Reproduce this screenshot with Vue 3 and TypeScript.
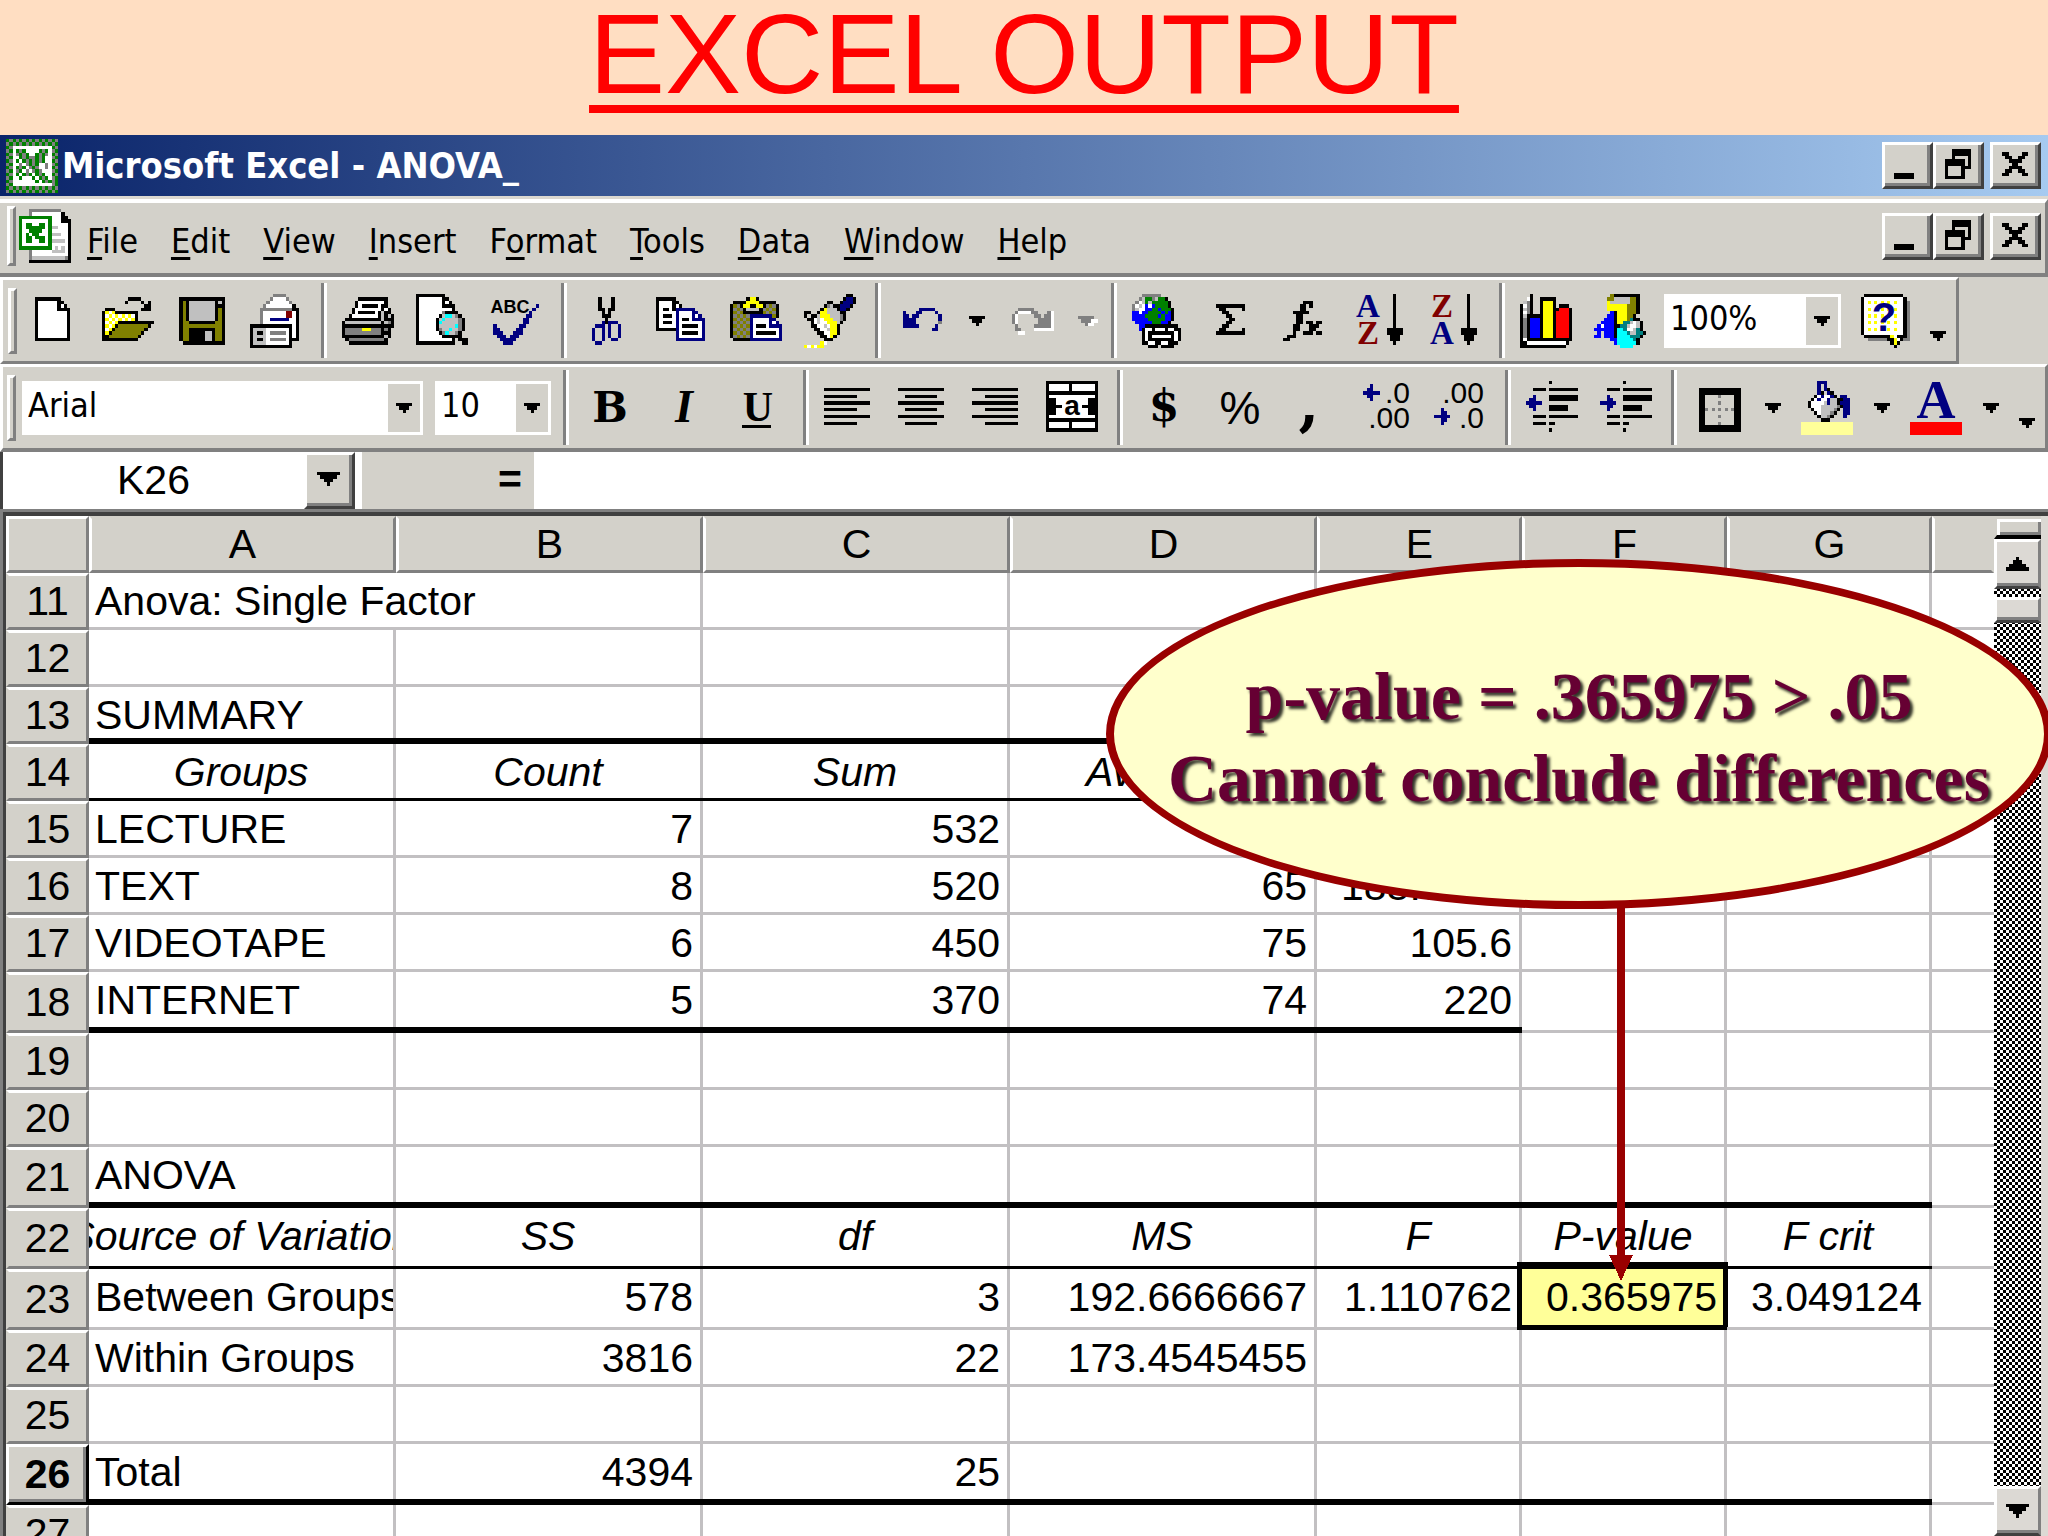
<script setup lang="ts">
import { ref } from 'vue'

interface Layer { fill: string; d: string }
interface Label { t: string; x: number; y: number; size: number; fill: string; serif?: boolean; slab?: boolean; bold?: boolean; italic?: boolean; anchor?: 'start' | 'middle' | 'end' }
interface Icon { layers: Layer[]; labels: Label[] }
interface Tool { kind: 'tool' | 'sep' | 'font' | 'size' | 'zoom' | 'more'; icon?: string; label?: string; drop?: boolean; off?: boolean }
interface Cell { t: string; a?: 'c' | 'r'; span?: number; hot?: boolean }
interface Row { n: number; cells: Cell[]; tall?: boolean; rule?: 'thick' | 'thin'; upTo?: number }

const palette: Record<string, string> = {
  k: '#000000', w: '#ffffff', g: '#808080', s: '#c0c0c0', n: '#000080', b: '#0000ff', y: '#ffff00',
  o: '#808000', r: '#800000', R: '#ff0000', t: '#008080', c: '#00ffff', G: '#008000', f: '#ffff99',
}

// Turns a bitmap written as text into one path per colour; a cell is about 3.25 by 3.375 px.
function paint(rows: string[]): Layer[] {
  const out: Record<string, string> = {}
  const px = (c: number) => Math.round(c * 3.25)
  const py = (r: number) => Math.round(r * 3.375)
  rows.forEach((row, r) => {
    let c = 0
    while (c < row.length) {
      const ch = row[c]
      let e = c + 1
      while (e < row.length && row[e] === ch) e++
      if (ch !== '.') out[ch] = (out[ch] ?? '') + `M${px(c)} ${py(r)}H${px(e)}V${py(r + 1)}H${px(c)}z`
      c = e
    }
  })
  return Object.entries(out).map(([ch, d]) => ({ fill: palette[ch], d }))
}
const icon = (rows: string[], labels: Label[] = []): Icon => ({ layers: paint(rows), labels })

const serifLabel = (t: string, x: number, y: number, size: number, fill: string): Label =>
  ({ t, x, y, size, fill, serif: true, bold: true, anchor: 'middle' })

const sortArrow = ['............k...', '............k...', '............k...', '............k...', '............k...',
  '............k...', '............k...', '............k...', '............k...', '............k...', '..........kkkkk.',
  '..........kkkkk.', '...........kkk..', '...........kkk..', '............k...']

const lines = (pad: number) => {
  const rows: string[] = ['']
  for (let i = 0; i < 6; i++) {
    rows.push('', i % 2 ? '.'.repeat(pad) + 'k'.repeat(10) : 'k'.repeat(14))
  }
  return rows
}

const icons: Record<string, Icon> = {
  app: icon([
    'GgGgGgGgGgGgGgGg', 'gGgGgGgGgGgGgGgG', 'GgwwwwwwwwwwwwGg', 'gGwGgGwwwwGgGwgG', 'GgwgGgGwwGgGgwGg',
    'gGwwGgGggGgGwwgG', 'GgwGwGgGgGgGwwGg', 'gGwwgwgGgGwwgwgG', 'GgwGgGwgGgwwgwGg', 'gGwgGwgwgGgwwwgG',
    'GgwGwGgGwGgGwwGg', 'gGwwGwwwGwGgGwgG', 'GgwwwwwwwGwGgGgG', 'gGwwwwwwwwwwwwgG', 'GgGgGgGgGgGgGgGg', 'gGgGgGgGgGgGgGgG']),
  book: icon([
    '...gggggggggg...', '...gwwwwwwwwwk..', 'GGGGGGGGGGwwwkk.', 'GwwwwwwwwGwwwkkk', 'GwGGwwGGwGwwwwwk', 'GwGGGGGGwGsswwwk',
    'GwwGGGGwwGwwwwwk', 'GwGwGGwwwGssswwk', 'GwGGwGGGwGwwwwwk', 'GwGGwwGGwGsssswk', 'GwwwwwwwwGwwwwwk', 'GGGGGGGGGGwswswk',
    '...gwwwwwwsssswk', '...gwwwwwwwwwwwk', '...gssssssssssgk', '...kkkkkkkkkkkkk']),
  new: icon([
    '', '..kkkkkkkk......', '..kwwwwwwkk.....', '..kwwwwwwkwk....', '..kwwwwwwkkkk...', '..kwwwwwwwwwk...', '..kwwwwwwwwwk...',
    '..kwwwwwwwwwk...', '..kwwwwwwwwwk...', '..kwwwwwwwwwk...', '..kwwwwwwwwwk...', '..kwwwwwwwwwk...', '..kwwwwwwwwwk...', '..kkkkkkkkkkk...']),
  open: icon([
    '', '........kkkk....', '.......k....k.k.', '.............kk.', '.kkk........kkk.', 'kywykkkkkkk.....', 'kwywywywywk.....', 'kywywywywyk.....',
    'kwywykkkkkkkkkkk', 'kywykoooooooook.', 'kwykoooooooook..', 'kykoooooooook...', 'kkoooooooook....', 'kkkkkkkkkkk.....']),
  save: icon([
    '', '.kkkkkkkkkkkkkk.', '.kokssssssssksk.', '.koksssssssskkk.', '.koksssssssskok.', '.koksssssssskok.', '.koksssssssskok.',
    '.koksssssssskok.', '.kookkkkkkkkook.', '.kooooooooooook.', '.kookkkkkkkkook.', '.kookkkkksskook.', '.kookkkkksskook.', '.kookkkkksskook.', '..kkkkkkkkkkkkk.']),
  mail: icon([
    '.......gggg.....', '......gwwwwg....', '.....gwwwwwwg...', '....gwwwwwwwwk..', '...ggggggggggkk.', '...gwwwwwwwrrwk.', '...gwwwwwwwrrwk.',
    '...gwwnnnnnnwwk.', '...gwwwwwwwwwwk.', 'kkkkkkkkkkkkkwk.', 'ksssswwwwwwwkwk.', 'kskkswgggggwkwk.', 'ksssswwwwwwwkwk.', 'kskkswgggggwkkk.', 'ksssswwwwwwwk...', 'kkkkkkkkkkkkk...']),
  print: icon([
    '', '.....kkkkkkkkk..', '....kwwwwwwwwk..', '....kwkkkkkwkk..', '...kwwwwwwwwkwk.', '...kwkkkkkwkskk.', '..kwwwwwwwwksksk', '.kkkkkkkkkkkskkk',
    'ksssssssssssksgk', 'kkkkkkkkkkkkkkkk', 'kgggggyyygggkgk.', 'kgggggggggggkkk.', 'kkkkkkkkkkkkksk.', '.kgggggggggggk..', '..kkkkkkkkkkkk..']),
  preview: icon([
    'kkkkkkkkk.......', 'kwwwwwwwkk......', 'kwwwwwwwkwk.....', 'kwwwwwwwkkkk....', 'kwwwwwwwwwwk....', 'kwwwwwwwgkkkk...', 'kwwwwwwksccsgk..',
    'kwwwwwkscssssgk.', 'kwwwwwkcsssssgk.', 'kwwwwwkssssscgk.', 'kwwwwwkgsscssgk.', 'kwwwwwwkgcssgk..', 'kwwwwwwwkkkkkk..', 'kwwwwwwwwwwk.kkk', 'kkkkkkkkkkkk..kk']),
  spell: icon([
    '', '', '', '..............n.', '.............n..', '............n...', '...........nn...', '..........nn....', '..........nn....', '.n.......nn.....',
    '.nn.....nn......', '.nnn...nnn......', '..nnn.nnn.......', '...nnnnn........', '....nnn.........'],
    [{ t: 'ABC', x: 20, y: 19, size: 18, fill: '#000', bold: true, anchor: 'middle' }]),
  cut: icon([
    '', '.....k...k......', '.....k...k......', '.....k...k......', '.....kk.kk......', '......k.k.......', '......kkk.......', '.......k........',
    '......nknnn.....', '....nnn.n..n....', '...n..n.n..n....', '...n..n.n..n....', '...n..n.n..n....', '...n..n..nn.....', '....nn..........']),
  copy: icon([
    '', 'kkkkkk..........', 'kwwwwkk.........', 'kwwwwkwk........', 'kwkkwknnnnnn....', 'kwwwwwnwwwwnn...', 'kwkkkwnwwwwnwn..', 'kwwwwwnwkkwnnnn.',
    'kwkkkwnwwwwwwwn.', 'kwwwwwnwkkkkkwn.', 'kkkkkknwwwwwwwn.', '......nwkkkkkwn.', '......nwwwwwwwn.', '......nnnnnnnnn.']),
  paste: icon([
    '', '.....kyyk.......', '.kkkkyyyykkkkk..', 'kogkyykkyykgogk.', 'kgogksssskgogok.', 'kogokkkkkkogogk.', 'kgogognnnnnnnok.', 'kogogonwwwwwnn..',
    'kgogognwwwwwnwn.', 'kogogonwkkkwnnnn', 'kgogognwwwwwwwwn', 'kogogonwkkkkkkwn', 'kgogognwwwwwwwwn', '.kkkkknnnnnnnnnn']),
  painter: icon([
    '.............kk.', '............knnk', '.......kk..knnnk', '......kgskknnnk.', '.....kysssknnk..', 'kk..kyysssskk...', 'k.kksyyysssgk...',
    '.kkwswyyyssgk...', '..kwswwyyysk....', '..kkwwswyyk.....', '...kkwwsyyk.....', '....kkwwyyk.....', '.....kkwyk......', '......kkk.......', '.....yw.........', 'ywywyy..........']),
  undo: icon([
    '', '', '', '', '.......nnnnn....', '..n...nn....n...', '..nn.nn......n..', '..nnnn.......n..', '..nnnn.......g..', '..nnnnn.....n...', '...........nn...']),
  redo: icon([
    '', '', '', '', '....ggggg.......', '...gwwwwgg...gw.', '..gw.....gg.ggw.', '..gw......ggggw.', '..gw......ggggw.', '...g.....gggggw.', '...gg....wwwwww.', '....ww..........']),
  web: icon([
    '...gggggg.......', '..gsGGgsGGk.....', '.gwsGsGGGGGk....', 'gwswbwbGGGGk....', 'gswwbbGGbGGGk...', 'bbwbbGGGGbGbk...', 'bbbbGGGGbGbbk...', 'bbbbbGGGGGbbk...',
    '.bbbbbGGGbbk....', '..bbkkkkkkkkkk..', '..bkwwkwwwkwwkk.', '...kwkkkkkkkkwk.', '...kwkwwwwwwkwk.', '...kwkkkkkkkkwk.', '...kkwwkkwwkkk..', '.....kkk.kkkk...']),
  sum: icon([
    '', '', '', '...kkkkkkkkk....', '....kk.....k....', '.....kk.........', '......kk........', '.......kk.......', '......kk........', '.....kk.........', '....kk.....k....', '...kkkkkkkkk....']),
  fx: icon([
    '', '', '.......kkk......', '......kk.k......', '......kk........', '....kkkkk.......', '.....kk.........', '.....kk.........', '.....kk.kk.kk...', '....kk...kkk....',
    '....kk...kk.....', '....k..kkk.kk...', '..kkk...........', '.kk.............']),
  az: icon(sortArrow, [serifLabel('A', 14, 23, 33, '#000080'), serifLabel('Z', 14, 50, 33, '#800000')]),
  za: icon(sortArrow, [serifLabel('Z', 14, 23, 33, '#800000'), serifLabel('A', 14, 50, 33, '#000080')]),
  chart: icon([
    '...k............', '..wk..kkkkk.....', '.sgk..kyyyk.....', 'kwgk..kyyyk.kkk.', 'ksgk..kyyykkRRRk', 'kwgk..kyyykRRRRk', 'kskkkkkyyykRRRRk', 'kgkbbbkyyykRRRRk', 'kgkbbbkyyykRRRRk',
    'kgkbbbkyyykRRRRk', 'kgkbbbkyyykRRRRk', 'kgkbbbkyyykRRRRk', 'kgkbbbkyyykRRRRk', 'kwkkkkkkkkkkkkkk', 'kkwwwwwwwwwwwwk.', 'kkkkkkkkkkkkkk..']),
  draw: icon([
    '.....okkkkkkkk..', '....oosssssook..', '....yssssssook..', '....yyyyyyoook..', '....yyyyyyoook..', '.....bkyyyoook..', '....bbkyyyook...', '...bbbkyyyotkk..',
    '..bbbbkyyttswsk.', '.bwbbbkkttswwsk.', 'bbbbbbkcctwwstk.', '.b.bbbkccctssttk', 'bb.bbbkcccctttk.', '.....bbccccctk..', '......bcccccck..', '........cccc....']),
  help: icon([
    '.kkkkkkkkkkkk...', 'kwwwwwwwwwwwwk..', 'kwywywywywywwkg.', 'kwwwwwwwwwwwwkg.', 'kwywywywywywwkg.', 'kwwwwwwwwwwwwkg.', 'kwywywywywywwkg.', 'kwwwwwwwwwwwwkg.',
    'kwywywywywywwkg.', 'kwwwwwwwwwwwwkg.', 'kwywywywywywwkg.', 'kwwwwwwwwwwwwkg.', '.kkkkkkkkywkkkg.', '..ggggggkkywkgg.', '.........kyk....', '..........k.....'],
    [{ t: '?', x: 23, y: 37, size: 40, fill: '#000080', bold: true, anchor: 'middle' }]),
  bold: icon([], [{ t: 'B', x: 26, y: 41, size: 42, fill: '#000', slab: true, bold: true, anchor: 'middle' }]),
  italic: icon([], [{ t: 'I', x: 26, y: 41, size: 46, fill: '#000', serif: true, bold: true, italic: true, anchor: 'middle' }]),
  underline: icon(['', '', '', '', '', '', '', '', '', '', '', '', '', '...kkkkkkkkk'], [serifLabel('U', 26, 40, 42, '#000')]),
  left: icon(lines(0)),
  center: icon(lines(2)),
  right: icon(lines(4)),
  merge: icon([
    'kkkkkkkkkkkkkkkk', 'kwwwwwwkwwwwwwwk', 'kwwwwwwkwwwwwwwk', 'kkkkkkkkkkkkkkkk', 'kwwwwwwwwwwwwwwk', 'kkkwwwwwwwwwwkkk', 'kkkwwwwwwwwwwkkk', 'kkkkkwwwwwwkkkkk',
    'kkkwwwwwwwwwwkkk', 'kkkwwwwwwwwwwkkk', 'kwwwwwwwwwwwwwwk', 'kkkkkkkkkkkkkkkk', 'kwwwwwwkwwwwwwwk', 'kwwwwwwkwwwwwwwk', 'kkkkkkkkkkkkkkkk'],
    [{ t: 'a', x: 26, y: 34, size: 28, fill: '#000', bold: true, anchor: 'middle' }]),
  currency: icon([], [{ t: '$', x: 26, y: 40, size: 44, fill: '#000', slab: true, bold: true, anchor: 'middle' }]),
  percent: icon([], [{ t: '%', x: 28, y: 43, size: 46, fill: '#000', anchor: 'middle' }]),
  comma: icon([], [{ t: ',', x: 23, y: 43, size: 60, fill: '#000', slab: true, bold: true, anchor: 'middle' }]),
  more0: icon(['', '...n', '..nn', '.nnnnn', '..nn', '...n'], [
    { t: '.0', x: 50, y: 22, size: 30, fill: '#000', anchor: 'end' }, { t: '.00', x: 50, y: 47, size: 30, fill: '#000', anchor: 'end' }]),
  less0: icon(['', '', '', '', '', '', '', '', '..n', '..nn', 'nnnnn', '..nn', '..n'], [
    { t: '.00', x: 50, y: 22, size: 30, fill: '#000', anchor: 'end' }, { t: '.0', x: 50, y: 47, size: 30, fill: '#000', anchor: 'end' }]),
  outdent: icon([
    '.......k........', '', '..kkkk.kkkkkkkkk', '', '..n....kkkkkkkkk', '.nn....kkkkkkkkk', 'nnnnn...........', '.nn....kkkkkk...', '..n....kkkkkk...', '', '..kkkk.kkkkkkkkk', '', '..kkkk.kk.......', '', '.......k........']),
  indent: icon([
    '.......k........', '', '..kkkk.kkkkkkkkk', '', '..n....kkkkkkkkk', '..nn...kkkkkkkkk', 'nnnnn...........', '..nn...kkkkkk...', '..n....kkkkkk...', '', '..kkkk.kkkkkkkkk', '', '..kkkk.kk.......', '', '.......k........']),
  border: icon([
    '', '', '..kkkkkkkkkkkkk.', '..kkkkkkkkkkkkk.', '..kk....g....kk.', '..kk.........kk.', '..kk....g....kk.', '..kk.........kk.', '..kkg.g.g.g.gkk.', '..kk.........kk.',
    '..kk....g....kk.', '..kk.........kk.', '..kk....g....kk.', '..kkkkkkkkkkkkk.', '..kkkkkkkkkkkkk.']),
  bucket: icon([
    '.....nnn........', '.....n.n........', '.....n.nk.......', '.....nk.nk......', '....kwnwwnk.nn..', '...kwnwwnsskknn.', '..kwwwwsnssknnn.', '..kwwwsssssgknn.',
    '...kwwssssgk.nn.', '....kwsssgk..nn.', '.....kssgk...n..', '......kkk.......', 'ffffffffffffffff', 'ffffffffffffffff', 'ffffffffffffffff', 'ffffffffffffffff']),
  color: icon(['', '', '', '', '', '', '', '', '', '', '', '', 'RRRRRRRRRRRRRRRR', 'RRRRRRRRRRRRRRRR', 'RRRRRRRRRRRRRRRR', 'RRRRRRRRRRRRRRRR'],
    [serifLabel('A', 26, 37, 54, '#000080')]),
}

const caret = paint(['kkkkk', '.kkk.', '..k..'])
const caretOff = paint(['ggggg.', '.gggww', '..gww.'])
const caretBig = paint(['kkkkkkk', '.kkkkk.', '..kkk..', '...k...'])
const caretUp = paint(['...k...', '..kkk..', '.kkkkk.', 'kkkkkkk'])

const windowButtons = [
  { label: 'Minimize', cls: 'min', art: paint(['', '', '', '', '', '', '', 'kkkkkk', 'kkkkkk']) },
  { label: 'Restore', cls: 'restore', art: paint(['..kkkkkk', '..kkkkkk', '..k....k', 'kkkkkk.k', 'kkkkkk.k', 'k....kkk', 'k....k', 'k....k', 'kkkkkk']) },
  { label: 'Close', cls: 'close', art: paint(['', 'kk....kk', '.kk..kk.', '..kkkk..', '...kk...', '..kkkk..', '.kk..kk.', 'kk....kk']) },
]

const menus: [string, string, string][] = [
  ['', 'F', 'ile'], ['', 'E', 'dit'], ['', 'V', 'iew'], ['', 'I', 'nsert'], ['F', 'o', 'rmat'],
  ['', 'T', 'ools'], ['', 'D', 'ata'], ['', 'W', 'indow'], ['', 'H', 'elp'],
]

const tool = (icon: string, label: string, drop = false, off = false): Tool => ({ kind: 'tool', icon, label, drop, off })
const sep: Tool = { kind: 'sep' }
const bars: { name: string; tools: Tool[] }[] = [
  { name: 'Standard', tools: [
    tool('new', 'New'), tool('open', 'Open'), tool('save', 'Save'), tool('mail', 'E-mail'), sep,
    tool('print', 'Print'), tool('preview', 'Print Preview'), tool('spell', 'Spelling'), sep,
    tool('cut', 'Cut'), tool('copy', 'Copy'), tool('paste', 'Paste'), tool('painter', 'Format Painter'), sep,
    tool('undo', 'Undo', true), tool('redo', 'Redo', true, true), sep,
    tool('web', 'Insert Hyperlink'), tool('sum', 'AutoSum'), tool('fx', 'Paste Function'), tool('az', 'Sort Ascending'), tool('za', 'Sort Descending'), sep,
    tool('chart', 'Chart Wizard'), tool('draw', 'Drawing'), { kind: 'zoom' }, tool('help', 'Help'), { kind: 'more' }] },
  { name: 'Formatting', tools: [
    { kind: 'font' }, { kind: 'size' }, sep,
    tool('bold', 'Bold'), tool('italic', 'Italic'), tool('underline', 'Underline'), sep,
    tool('left', 'Align Left'), tool('center', 'Center'), tool('right', 'Align Right'), tool('merge', 'Merge and Center'), sep,
    tool('currency', 'Currency Style'), tool('percent', 'Percent Style'), tool('comma', 'Comma Style'), tool('more0', 'Increase Decimal'), tool('less0', 'Decrease Decimal'), sep,
    tool('outdent', 'Decrease Indent'), tool('indent', 'Increase Indent'), sep,
    tool('border', 'Borders', true), tool('bucket', 'Fill Color', true), tool('color', 'Font Color', true), { kind: 'more' }] },
]
const combos: Record<string, { label: string; value: string }> = {
  font: { label: 'Font', value: 'Arial' },
  size: { label: 'Font Size', value: '10' },
  zoom: { label: 'Zoom', value: '100%' },
}

const nameBox = ref('K26')
const formula = ref('')

const columns = ['A', 'B', 'C', 'D', 'E', 'F', 'G', '']
const L = (t: string): Cell => ({ t })
const C = (t: string): Cell => ({ t, a: 'c' })
const N = (t: string): Cell => ({ t, a: 'r' })
const fill = (cells: Cell[]): Cell[] => {
  const used = cells.reduce((n, c) => n + (c.span ?? 1), 0)
  return cells.concat(Array.from({ length: 8 - used }, () => L('')))
}
const rows: Row[] = [
  { n: 11, cells: fill([{ t: 'Anova: Single Factor', span: 2 }]) },
  { n: 12, cells: fill([]) },
  { n: 13, cells: fill([L('SUMMARY')]), rule: 'thick', upTo: 5 },
  { n: 14, cells: fill([C('Groups'), C('Count'), C('Sum'), C('Average'), C('Variance')]), rule: 'thin', upTo: 5 },
  { n: 15, cells: fill([L('LECTURE'), N('7'), N('532'), N('76'), N('181.3333')]) },
  { n: 16, cells: fill([L('TEXT'), N('8'), N('520'), N('65'), N('188.5714')]) },
  { n: 17, cells: fill([L('VIDEOTAPE'), N('6'), N('450'), N('75'), N('105.6')]) },
  { n: 18, cells: fill([L('INTERNET'), N('5'), N('370'), N('74'), N('220')]), tall: true, rule: 'thick', upTo: 5 },
  { n: 19, cells: fill([]) },
  { n: 20, cells: fill([]) },
  { n: 21, cells: fill([L('ANOVA')]), tall: true, rule: 'thick', upTo: 7 },
  { n: 22, cells: fill([C('Source of Variation'), C('SS'), C('df'), C('MS'), C('F'), C('P-value'), C('F crit')]), tall: true, rule: 'thin', upTo: 7 },
  { n: 23, cells: fill([L('Between Groups'), N('578'), N('3'), N('192.6666667'), N('1.110762'), { t: '0.365975', a: 'r', hot: true }, N('3.049124')]), tall: true },
  { n: 24, cells: fill([L('Within Groups'), N('3816'), N('22'), N('173.4545455')]) },
  { n: 25, cells: fill([]) },
  { n: 26, cells: fill([L('Total'), N('4394'), N('25')]), tall: true, rule: 'thick', upTo: 7 },
  { n: 27, cells: fill([]) },
]
// The merged cell in row 11 carries no rule, so index and column agree wherever a rule is drawn.
const cellClass = (row: Row, cell: Cell, i: number) => ({
  mid: cell.a === 'c',
  num: cell.a === 'r',
  hot: cell.hot,
  thick: row.rule === 'thick' && i < (row.upTo ?? 0),
  thin: row.rule === 'thin' && i < (row.upTo ?? 0),
})
</script>

<template>
  <main class="page">
    <h1>EXCEL OUTPUT</h1>

    <header class="titlebar">
      <svg class="icon" viewBox="0 0 52 54"><path v-for="l in icons.app.layers" :key="l.fill" :fill="l.fill" :d="l.d" /></svg>
      <span class="caption">Microsoft Excel - ANOVA_</span>
      <span class="winbtns">
        <button v-for="b in windowButtons" :key="b.label" :class="['raised', b.cls]" :aria-label="b.label">
          <svg viewBox="0 0 26 30"><path v-for="l in b.art" :key="l.fill" :fill="l.fill" :d="l.d" /></svg>
        </button>
      </span>
    </header>

    <nav class="menubar">
      <span class="grip"></span>
      <svg class="icon" viewBox="0 0 52 54"><path v-for="l in icons.book.layers" :key="l.fill" :fill="l.fill" :d="l.d" /></svg>
      <span class="menus">
        <button v-for="m in menus" :key="m.join('')">{{ m[0] }}<u>{{ m[1] }}</u>{{ m[2] }}</button>
      </span>
      <span class="winbtns">
        <button v-for="b in windowButtons" :key="b.label" :class="['raised', b.cls]" :aria-label="b.label + ' workbook'">
          <svg viewBox="0 0 26 30"><path v-for="l in b.art" :key="l.fill" :fill="l.fill" :d="l.d" /></svg>
        </button>
      </span>
    </nav>

    <div v-for="bar in bars" :key="bar.name" :class="['toolbar', bar.name.toLowerCase()]" role="toolbar" :aria-label="bar.name">
      <span class="grip"></span>
      <template v-for="(t, i) in bar.tools" :key="i">
        <span v-if="t.kind === 'sep'" class="sep"></span>
        <template v-else-if="t.kind === 'tool'">
          <button class="tool" :aria-label="t.label" :disabled="t.off">
            <svg class="icon" viewBox="0 0 52 54">
              <path v-for="l in icons[t.icon!].layers" :key="l.fill" :fill="l.fill" :d="l.d" />
              <text v-for="x in icons[t.icon!].labels" :key="x.t" :x="x.x" :y="x.y" :fill="x.fill" :font-size="x.size"
                :class="{ serif: x.serif, slab: x.slab, bold: x.bold, italic: x.italic }" :text-anchor="x.anchor">{{ x.t }}</text>
            </svg>
          </button>
          <button v-if="t.drop" class="drop" :aria-label="t.label + ' options'" :disabled="t.off">
            <svg class="caret" viewBox="0 0 20 10"><path v-for="l in t.off ? caretOff : caret" :key="l.fill" :fill="l.fill" :d="l.d" /></svg>
          </button>
        </template>
        <button v-else-if="t.kind === 'more'" class="more" aria-label="More buttons">
          <svg class="caret" viewBox="0 0 20 10"><path v-for="l in caret" :key="l.fill" :fill="l.fill" :d="l.d" /></svg>
        </button>
        <label v-else :class="['combo', t.kind]">
          <select :aria-label="combos[t.kind].label"><option>{{ combos[t.kind].value }}</option></select>
          <span class="arrow"><svg class="caret" viewBox="0 0 20 10"><path v-for="l in caret" :key="l.fill" :fill="l.fill" :d="l.d" /></svg></span>
        </label>
      </template>
    </div>

    <div class="formulabar">
      <input v-model="nameBox" class="namebox" aria-label="Name Box" />
      <button class="raised pick" aria-label="Names">
        <svg viewBox="0 0 23 14"><path v-for="l in caretBig" :key="l.fill" :fill="l.fill" :d="l.d" /></svg>
      </button>
      <button class="equals">=</button>
      <input v-model="formula" class="formula" aria-label="Formula" />
    </div>

    <section class="sheet">
      <div class="grid">
        <table>
          <colgroup>
            <col class="head" /><col v-for="n in 4" :key="n" class="wide" /><col v-for="n in 3" :key="n + 4" class="slim" /><col />
          </colgroup>
          <thead>
            <tr><th class="corner"></th><th v-for="(c, i) in columns" :key="i" scope="col">{{ c }}</th></tr>
          </thead>
          <tbody>
            <tr v-for="row in rows" :key="row.n" :class="{ tall: row.tall, active: row.n === 26 }">
              <th scope="row">{{ row.n }}</th>
              <td v-for="(cell, i) in row.cells" :key="i" :colspan="cell.span" :class="cellClass(row, cell, i)"><div>{{ cell.t }}</div></td>
            </tr>
          </tbody>
        </table>
      </div>
      <div class="scrollbar">
        <span class="split"></span>
        <button class="step" aria-label="Scroll up">
          <svg viewBox="0 0 23 14"><path v-for="l in caretUp" :key="l.fill" :fill="l.fill" :d="l.d" /></svg>
        </button>
        <span class="thumb"></span>
        <button class="step down" aria-label="Scroll down">
          <svg viewBox="0 0 23 14"><path v-for="l in caretBig" :key="l.fill" :fill="l.fill" :d="l.d" /></svg>
        </button>
      </div>

      <svg class="pointer" viewBox="0 0 24 378"><path fill="#990000" d="M8 0h8v352h8l-12 26L0 352h8z" /></svg>
      <aside class="callout">
        <p>p-value = .365975 &gt; .05</p>
        <p>Cannot conclude differences</p>
      </aside>
    </section>
  </main>
</template>

<style>
body { margin: 0; overflow: hidden; }
</style>

<style scoped>
.page {
  --face: #d3d1ca;
  --shade: #808080;
  --dark: #404040;
  --ui: 'DejaVu Sans Condensed', 'DejaVu Sans', sans-serif;
  --cell: 'Liberation Sans', Arial, sans-serif;
  display: flex;
  flex-direction: column;
  height: 100vh;
  overflow: hidden;
  background: var(--face);
  color: #000;
  font-family: var(--cell);
}
*, *::after { box-sizing: border-box; }
button, input, select { font: inherit; color: inherit; border: 0; padding: 0; margin: 0; border-radius: 0; background: none; outline: 0; }
svg { display: block; flex: none; }
path { shape-rendering: crispEdges; }
.icon { width: 52px; height: 54px; overflow: visible; }
.caret { width: 20px; height: 10px; margin-right: -4px; }

h1 {
  margin: 0;
  padding-bottom: 27px;
  background: #ffdec2;
  color: #ff0000;
  font-size: 114px;
  font-weight: 400;
  line-height: 108px;
  text-align: center;
  text-decoration: underline;
  text-decoration-skip-ink: none;
  text-decoration-thickness: 8px;
  text-underline-offset: 12px;
}

.titlebar {
  display: flex;
  align-items: center;
  height: 64px;
  padding: 0 7px 0 6px;
  border-bottom: 3px solid #dcd8d0;
  background: linear-gradient(90deg, #0a246a, #a6caf0);
  flex: none;
}
.caption { flex: 1; margin-left: 4px; color: #fff; font: bold 36px/48px var(--ui); }
.raised {
  display: flex;
  align-items: center;
  justify-content: center;
  border: 3px solid;
  border-color: #fff var(--dark) var(--dark) #fff;
  background: var(--face);
  box-shadow: inset -3px -3px var(--shade);
}
.winbtns { display: flex; }
.winbtns .raised { width: 51px; height: 47px; padding: 0 1px 3px 0; }
.winbtns .close { margin-left: 6px; }
.winbtns svg { width: 26px; height: 30px; }

.menubar {
  display: flex;
  align-items: center;
  height: 78px;
  padding: 0 4px 4px 7px;
  border: solid;
  border-width: 4px 3px 4px 0;
  border-color: #fff var(--shade) var(--shade);
  flex: none;
}
.grip { width: 9px; height: 60px; border: 3px solid; border-color: #fff var(--shade) var(--shade) #fff; background: var(--face); flex: none; }
.menubar .grip { margin-right: 3px; }
.menus { display: flex; flex: 1; gap: 33px; margin-left: 16px; padding-top: 9px; font: 34px/40px var(--ui); }
.menus button { line-height: 40px; }
.menus u { text-decoration-thickness: 3px; text-underline-offset: 4px; text-decoration-skip-ink: none; }

.toolbar {
  display: flex;
  align-items: center;
  align-self: flex-start;
  height: 87px;
  border: 3px solid;
  border-color: #fff var(--shade) var(--shade) #fff;
  flex: none;
}
.standard { padding: 0 4px 0 5px; }
.formatting { align-self: stretch; padding-left: 4px; border-bottom-width: 4px; height: 88px; }
.toolbar .grip { height: 66px; }
.tool { display: flex; width: 74px; height: 72px; padding: 0 11px; align-items: center; flex: none; }
.tool text { font-family: var(--cell); }
.tool .serif { font-family: 'Liberation Serif', 'Times New Roman', serif; }
.tool .slab { font-family: 'DejaVu Serif', serif; }
.tool .bold { font-weight: 700; }
.tool .italic { font-style: italic; }
.drop { display: flex; width: 35px; height: 72px; align-items: center; justify-content: center; flex: none; }
.more { display: flex; align-self: stretch; align-items: flex-end; width: 28px; padding: 0 6px 20px; flex: none; }
.formatting .more { margin-left: 5px; }
.sep { width: 6px; height: 75px; margin: 0 4px 0 8px; border-left: 3px solid var(--shade); border-right: 3px solid #fff; flex: none; }
.combo { display: flex; align-items: center; height: 54px; padding: 3px; background: #fff; flex: none; }
.combo select { flex: 1; min-width: 0; height: 48px; padding: 0 0 6px 3px; appearance: none; font: 34px/40px var(--ui); }
.arrow { display: flex; align-items: center; justify-content: center; width: 32px; height: 48px; background: var(--face); }
.font { width: 401px; margin-left: 6px; }
.size { width: 116px; margin: 0 4px 0 12px; }
.zoom { width: 177px; margin: 0 9px 0 7px; }

.formulabar { display: flex; height: 57px; border-left: 3px solid var(--dark); background: #fff; flex: none; }
.namebox { width: 301px; text-align: center; font-size: 41px; }
.pick { width: 51px; padding: 0 3px 3px 0; }
.pick svg, .step svg { width: 23px; height: 14px; }
.equals { width: 172px; margin-left: 7px; padding: 0 12px 2px 0; background: var(--face); font-size: 41px; font-weight: 700; text-align: right; }
.formula { flex: 1; font-size: 41px; }

.sheet {
  position: relative;
  display: flex;
  flex: 1;
  min-height: 0;
  overflow: hidden;
  border: solid var(--shade);
  border-width: 3px 0 0 3px;
}
.grid { flex: 1; overflow: hidden; border: solid var(--dark); border-width: 4px 0 0 3px; background: #fff; }
table { width: 100%; table-layout: fixed; border-collapse: separate; border-spacing: 0; font-size: 41px; }
.head { width: 83px; }
.wide { width: 307px; }
.slim { width: 205px; }
th { height: 57px; padding: 0; font-weight: 400; line-height: 49px; background: var(--face); border: 3px solid; }
thead th { border-color: var(--face) var(--shade) var(--shade) #fff; }
thead th:last-child { border-right-color: var(--face); }
thead .corner { border-top-color: #fff; }
tbody th { border-color: #fff var(--shade) var(--shade) var(--face); }
td { position: relative; height: 57px; padding: 4px 0 0; vertical-align: top; border: solid #c2c0c2; border-width: 0 3px 3px 0; }
td:last-child { border-right: 0; }
td div { height: 49px; padding: 0 6px; line-height: 49px; white-space: nowrap; overflow: hidden; }
td.mid div { display: flex; justify-content: center; padding: 0; font-style: italic; }
td.num div { padding-right: 7px; text-align: right; }
.tall th, .tall td { height: 61px; }
td.thick::after, td.thin::after { content: ''; position: absolute; left: 0; right: -3px; bottom: -3px; height: 3px; background: #000; }
td.thick::after { height: 6px; }
.active th { font-weight: 700; border-color: #fff #000 #000 #fff; box-shadow: inset -3px -3px var(--shade); }
td.hot { background: #ffff99; }
td.hot::after { content: ''; position: absolute; inset: -7px -4px -3px -5px; border: 5px solid #000; border-top-width: 7px; }

.scrollbar {
  display: flex;
  flex-direction: column;
  width: 54px;
  padding-right: 7px;
  border-top: 4px solid var(--dark);
  background: repeating-conic-gradient(#000 0 25%, #fff 0 50%) 0 0 / 6px 6px content-box, #dcd9d4;
  flex: none;
}
.split { height: 23px; border: 3px solid var(--face); border-bottom: 4px solid #000; border-right: 0; background: var(--face); box-shadow: inset 3px 3px #fff, inset -3px -3px var(--shade); }
.step, .thumb { border: 3px solid; border-color: #fff var(--shade) var(--dark) #fff; background: #dcd9d4; box-shadow: inset 0 -3px var(--shade); }
.step { display: flex; align-items: center; justify-content: center; height: 50px; }
.thumb { height: 26px; margin-top: 8px; }
.down { margin-top: auto; }

.pointer { position: absolute; left: 1606px; top: 391px; width: 24px; height: 378px; }
.callout {
  position: absolute;
  left: 1103px;
  top: 47px;
  display: flex;
  flex-direction: column;
  justify-content: center;
  width: 946px;
  height: 350px;
  padding-top: 6px;
  border: 8px solid #990000;
  border-radius: 50%;
  background: #ffffcc;
  color: #660033;
  font: bold 68px/82px 'Liberation Serif', 'Times New Roman', serif;
  text-align: center;
  text-shadow: 3px 3px 3px rgba(0, 0, 0, 0.8);
  white-space: nowrap;
}
.callout p { margin: 0; }
</style>
